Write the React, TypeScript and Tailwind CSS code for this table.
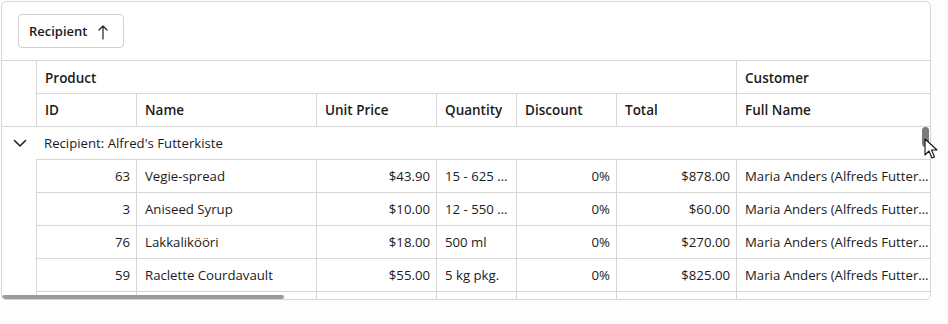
import React from 'react';

type Row = {
  id: number;
  name: string;
  price: string;
  qty: string;
  discount: string;
  total: string;
  customer: string;
};

const rows: Row[] = [
  { id: 63, name: 'Vegie-spread', price: '$43.90', qty: '15 - 625 g jars', discount: '0%', total: '$878.00', customer: 'Maria Anders (Alfreds Futterkiste)' },
  { id: 3, name: 'Aniseed Syrup', price: '$10.00', qty: '12 - 550 ml bottles', discount: '0%', total: '$60.00', customer: 'Maria Anders (Alfreds Futterkiste)' },
  { id: 76, name: 'Lakkalikööri', price: '$18.00', qty: '500 ml', discount: '0%', total: '$270.00', customer: 'Maria Anders (Alfreds Futterkiste)' },
  { id: 59, name: 'Raclette Courdavault', price: '$55.00', qty: '5 kg pkg.', discount: '0%', total: '$825.00', customer: 'Maria Anders (Alfreds Futterkiste)' },
];

// column widths, each including its 1px left border
const cols = ['w-[100px]', 'w-[180px]', 'w-[120px]', 'w-[80px]', 'w-[100px]', 'w-[120px]', 'w-[200px]'];

const cell = 'h-[33px] shrink-0 border-l border-t border-[#d6d6d6] flex items-center overflow-hidden';

function Cell({ w, right, body, children }: { w: string; right?: boolean; body?: boolean; children?: React.ReactNode }) {
  return (
    <div className={`${cell} ${w} ${right ? 'justify-end pr-[6px] pl-2' : 'pl-2 pr-[6px]'} ${body ? 'pt-[2px]' : ''}`}>
      <span className="truncate">{children}</span>
    </div>
  );
}

function Chevron() {
  return (
    <svg width="14" height="14" viewBox="0 0 14 14" fill="none">
      <path d="M1.5 4.5 L7 10 L12.5 4.5" stroke="#222" strokeWidth="1.6" strokeLinecap="round" strokeLinejoin="round" />
    </svg>
  );
}

function UpArrow() {
  return (
    <svg width="10" height="16" viewBox="0 0 10 16" fill="none">
      <path d="M5 2 L5 15 M1 6 L5 2 L9 6" stroke="#222" strokeWidth="1.2" strokeLinecap="round" strokeLinejoin="round" />
    </svg>
  );
}

function Pointer() {
  return (
    <svg width="16" height="22" viewBox="0 0 16 22">
      <path d="M1 1 L1 17 L5 13 L8 20 L10.5 19 L7.5 12 L13 12 Z" fill="#fff" stroke="#111" strokeWidth="1.1" strokeLinejoin="round" />
    </svg>
  );
}

export default function App() {
  return (
    <div className="relative w-[948px] h-[324px] bg-[#fdfdfd] pt-px pl-px text-[#1b1b1b] text-[13.2px]" style={{ fontFamily: '"Open Sans", "Noto Sans", sans-serif' }}>
      <div className="relative w-[930px] h-[299px] border border-[#d6d6d6] rounded-[5px] bg-white overflow-hidden">
        {/* group panel */}
        <div className="h-[58px] pl-[16px] pt-[12px]">
          <button className="h-[34px] w-[106px] pl-[10px] pt-[2px] flex items-center gap-[11px] border border-[#d0d0d0] rounded-[4px] bg-white font-semibold text-[13px]">
            Recipient
            <UpArrow />
          </button>
        </div>

        {/* column headers */}
        <div className="flex border-t border-[#d6d6d6] font-semibold text-[13.5px]">
          <div className="w-[34px] shrink-0" />
          <div className="flex flex-col">
            <div className="flex">
              <div className="h-[32px] w-[700px] shrink-0 border-l border-[#d6d6d6] flex items-center pl-2 pt-[2px]">Product</div>
              <div className="h-[32px] w-[200px] shrink-0 border-l border-[#d6d6d6] flex items-center pl-2 pt-[2px]">Customer</div>
            </div>
            <div className="flex">
              <Cell w={cols[0]}>ID</Cell>
              <Cell w={cols[1]}>Name</Cell>
              <Cell w={cols[2]}>Unit Price</Cell>
              <Cell w={cols[3]}>Quantity</Cell>
              <Cell w={cols[4]}>Discount</Cell>
              <Cell w={cols[5]}>Total</Cell>
              <Cell w={cols[6]}>Full Name</Cell>
            </div>
          </div>
        </div>

        {/* group row */}
        <div className="h-[33px] flex items-center border-t border-[#d6d6d6]">
          <div className="w-[34px] flex justify-center pl-px">
            <Chevron />
          </div>
          <span className="pl-[8px] pt-[2px]">Recipient: Alfred's Futterkiste</span>
        </div>

        {/* data rows */}
        {rows.map((r) => (
          <div key={r.id} className="flex">
            <div className="w-[34px] shrink-0" />
            <Cell w={cols[0]} body right>{r.id}</Cell>
            <Cell w={cols[1]} body>{r.name}</Cell>
            <Cell w={cols[2]} body right>{r.price}</Cell>
            <Cell w={cols[3]} body>{r.qty}</Cell>
            <Cell w={cols[4]} body right>{r.discount}</Cell>
            <Cell w={cols[5]} body right>{r.total}</Cell>
            <Cell w={cols[6]} body>{r.customer}</Cell>
          </div>
        ))}
        <div className="flex">
          <div className="w-[34px] shrink-0" />
          {cols.map((w) => (
            <div key={w} className={`${cell} ${w}`} />
          ))}
        </div>

        {/* scrollbars */}
        <div className="absolute right-[1px] top-[125px] w-[7px] h-[20px] rounded-full bg-[#7b7b7b]" />
        <div className="absolute left-0 bottom-0 w-[282px] h-[4px] rounded-full bg-[#9b9b9b]" />
      </div>
      <div className="absolute left-[924px] top-[138px]">
        <Pointer />
      </div>
    </div>
  );
}
